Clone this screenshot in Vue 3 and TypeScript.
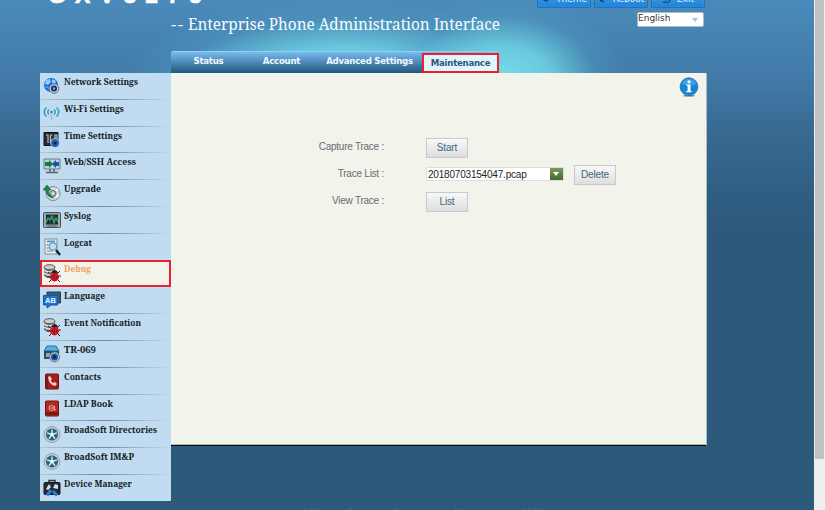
<script setup lang="ts">
import { ref } from 'vue'

interface MenuItem {
  label: string
  icon: string
  width: number
}

const tabs = [
  { label: 'Status', key: 'status' },
  { label: 'Account', key: 'account' },
  { label: 'Advanced Settings', key: 'advanced' },
  { label: 'Maintenance', key: 'maintenance' },
]
const activeTab = ref('maintenance')

const menu: MenuItem[] = [
  { label: 'Network Settings', icon: 'globe', width: 74 },
  { label: 'Wi-Fi Settings', icon: 'wifi', width: 60 },
  { label: 'Time Settings', icon: 'time', width: 58 },
  { label: 'Web/SSH Access', icon: 'web', width: 72 },
  { label: 'Upgrade', icon: 'upgrade', width: 37 },
  { label: 'Syslog', icon: 'syslog', width: 27 },
  { label: 'Logcat', icon: 'logcat', width: 28 },
  { label: 'Debug', icon: 'bug', width: 27 },
  { label: 'Language', icon: 'language', width: 41 },
  { label: 'Event Notification', icon: 'bug', width: 77 },
  { label: 'TR-069', icon: 'tr', width: 32 },
  { label: 'Contacts', icon: 'contacts', width: 37 },
  { label: 'LDAP Book', icon: 'ldap', width: 49 },
  { label: 'BroadSoft Directories', icon: 'broadsoft', width: 93 },
  { label: 'BroadSoft IM&P', icon: 'broadsoft', width: 70 },
  { label: 'Device Manager', icon: 'device', width: 68 },
]
const activeItem = ref('Debug')
const traceFile = ref('20180703154047.pcap')
</script>

<template>
  <div class="window">
    <div class="page">
      <header class="header">
        <div class="top">
          <div class="logo">GXV3275</div>
          <div class="actions">
            <button class="action"><svg viewBox="0 0 12 12"><circle cx="6" cy="5" r="4" fill="#174e7c" /></svg><span>Theme</span></button>
            <button class="action"><svg viewBox="0 0 12 12"><path d="M3 2v4q0 3 4 3M6 5h4" fill="none" stroke="#123e65" stroke-width="2" /></svg><span>Reboot</span></button>
            <button class="action"><svg viewBox="0 0 12 12"><path d="M1 10h6l3-3V1M4 8l4-4" fill="none" stroke="#174e7c" stroke-width="1.5" /></svg><span>Exit</span></button>
          </div>
        </div>
        <div class="title-row">
          <h1>
            <svg width="332" height="26">
              <text x="0" y="18" textLength="12" lengthAdjust="spacing">--</text>
              <text x="17" y="18" textLength="312" lengthAdjust="spacingAndGlyphs">Enterprise Phone Administration Interface</text>
            </svg>
          </h1>
          <div class="lang"><span>English</span><i></i></div>
        </div>
        <nav class="tabs">
          <a v-for="t in tabs" :key="t.key" :class="['tab', t.key, { active: activeTab === t.key }]" @click="activeTab = t.key">{{ t.label }}</a>
        </nav>
      </header>

      <div class="body">
        <aside class="sidebar">
          <a v-for="m in menu" :key="m.label" :class="['item', { active: activeItem === m.label }]" @click="activeItem = m.label">
            <svg class="icon" viewBox="0 0 18 18">
              <g v-if="m.icon === 'globe'">
                <circle cx="8" cy="8" r="7" fill="#176bd8" />
                <path d="M3 3l4-1 1 3-3 3-3-1zM9 2l4 2-1 3-3-1z" fill="#8dd0ff" />
                <path d="M2 10l3 0 2 4" stroke="#65b7f4" fill="none" />
                <circle cx="11" cy="11.5" r="4.8" fill="#c7ccd2" stroke="#65727f" />
                <circle cx="11" cy="11.5" r="3" fill="#142f63" /><circle cx="11" cy="11.5" r="1.2" fill="#69b6ff" />
              </g>
              <g v-else-if="m.icon === 'wifi'" fill="none" stroke="#369fc4" stroke-width="1.5">
                <path d="M3.500 3.500Q-1 8 3.500 12.500M6 5.500Q3.500 8 6 10.500M13.500 3.500Q18 8 13.500 12.500M11 5.500Q13.500 8 11 10.500" />
                <circle cx="8.500" cy="8" r="1.300" fill="#2789b5" stroke="none" /><path d="M8.500 10.500v5.500" stroke="#a8b8c2" />
              </g>
              <g v-else-if="m.icon === 'time'">
                <path d="M1 1.500h14v13H1z" fill="#292d33" stroke="#11151b" />
                <path d="M3 4h2v8M7.500 4v8M7.500 4h2M12 4h2v3h-2z" stroke="#b6bfc8" fill="none" stroke-width="1.200" />
                <circle cx="12" cy="12" r="4.800" fill="#bdc6d1" /><circle cx="12" cy="12" r="3.900" fill="#2061bb" /><circle cx="12" cy="12" r="1.600" fill="#10203d" />
              </g>
              <g v-else-if="m.icon === 'web'">
                <path d="M1 2h16v10H1z" fill="#b6d5e8" stroke="#6b7880" />
                <path d="M2 5h4V3l4 4-4 4V9H2z" fill="#157c3c" /><path d="M16 5h-3V3L9 7l4 4V9h3z" fill="#1e559a" />
                <path d="M7 12v3M11 12v3M3 15.500h12" stroke="#59636a" stroke-width="1.500" />
              </g>
              <g v-else-if="m.icon === 'upgrade'">
                <circle cx="10" cy="9.500" r="7" fill="#d4dcdf" stroke="#7e8990" /><path d="M10 9l5-4M11 11l5 1" stroke="#fff" stroke-width="1.500" />
                <circle cx="10" cy="9.500" r="3" fill="#a8b9be" stroke="#4f6c70" /><circle cx="10" cy="9.500" r="1" fill="#fff" />
                <path d="M0 6l4-5 4 5H5.500q0 6 5 8-7-1-8-8z" fill="#198443" stroke="#0c6331" stroke-width=".6" />
              </g>
              <g v-else-if="m.icon === 'syslog'">
                <rect x=".5" y="1.500" width="17" height="15" rx="1" fill="#a0a8ac" stroke="#475156" /><path d="M3 3.500h12v10H3z" fill="#152f31" />
                <path d="M3 3.500h12M7 3.500v10M11 3.500v10M3 8.500h12" stroke="#54686a" stroke-width=".5" /><path d="M3 12l2-5 2 2 2-4 2 7 2-5 2 4" fill="none" stroke="#35a371" stroke-width="1.300" /><path d="M4 15h10" stroke="#4b565c" />
              </g>
              <g v-else-if="m.icon === 'logcat'">
                <path d="M2 1h12v15H2z" fill="#e6eff3" stroke="#7c8f9e" /><path d="M4 3.500h8" stroke="#4a9bd0" stroke-width="2" /><path d="M4 7h3M4 10h3M4 13h6" stroke="#678aa1" /><path d="M3 7h2M3 10h2" stroke="#d68b66" />
                <circle cx="10" cy="8.500" r="3.700" fill="#bde3f1" stroke="#6a8795" /><path d="M13 12l4 5" stroke="#18252e" stroke-width="2.500" />
              </g>
              <g v-else-if="m.icon === 'bug'">
                <path d="M1 3v9q5 4 11 0V3" fill="#697075" /><ellipse cx="6.500" cy="3.200" rx="5.500" ry="2.500" fill="#c7cccf" stroke="#555" /><path d="M1 6q5 4 10 0M1 9q5 4 10 0" stroke="#e3e5e6" fill="none" stroke-width="1.400" />
                <path d="M5 8l4 3M17 7l-4 4M4 13h4M18 12h-5M6 18l4-4M17 18l-4-4" stroke="#2c2424" />
                <ellipse cx="11.500" cy="13" rx="4.600" ry="4.400" fill="#cf1b25" /><path d="M8 9q1-3 3.500-3T15 9z" fill="#2b2427" /><path d="M11.500 9v8" stroke="#5d1117" stroke-width=".6" /><circle cx="9.500" cy="13" r=".7" fill="#501016" /><circle cx="13.700" cy="13" r=".7" fill="#501016" />
              </g>
              <g v-else-if="m.icon === 'language'">
                <path d="M4 1h13.500v11h-3l-2 2-3-3H4z" fill="#45576a" stroke="#263c51" /><path d="M.5 4.500h14v9.500H8l-4 3v-3H.5z" fill="#1d77cf" stroke="#17569a" />
                <text x="2" y="12" font-family="Liberation Sans" font-weight="700" font-size="7.5" fill="#e8f7ff">AB</text>
              </g>
              <g v-else-if="m.icon === 'tr'">
                <path d="M4 1h9l3 5H1z" fill="#55b1e8" stroke="#1e6fab" /><path d="M1 6h15v8H1z" fill="#314957" /><path d="M3 8h4v4H3z" fill="#8eabb9" />
                <circle cx="11.500" cy="12" r="5" fill="#bdc9d3" stroke="#687a87" /><circle cx="11.500" cy="12" r="3.500" fill="#1557ac" /><circle cx="11.500" cy="12" r="1.400" fill="#0a2142" />
              </g>
              <g v-else-if="m.icon === 'contacts'">
                <rect x="2.500" y="2" width="13" height="15" rx="1" fill="#a71c19" stroke="#6c1711" /><path d="M4 3v13" stroke="#671410" /><path d="M5 5q1 8 7 9l2-2-2-2-2 1q-2-1-2-3l1-1-2-3z" fill="#f1d0c8" />
              </g>
              <g v-else-if="m.icon === 'ldap'">
                <rect x="2.500" y="2" width="13" height="15" rx="1" fill="#b3281f" stroke="#6c1711" /><path d="M3 14.500h12" stroke="#671410" stroke-width="2" /><circle cx="8.500" cy="9" r="2.600" fill="none" stroke="#e6aaa3" /><circle cx="8.500" cy="9" r="1" fill="#e6aaa3" /><path d="M11.500 7v4h1.500" stroke="#e6aaa3" fill="none" />
              </g>
              <g v-else-if="m.icon === 'broadsoft'">
                <circle cx="9" cy="9.500" r="8" fill="#c4c7c8" stroke="#929ca0" stroke-width=".8" /><circle cx="9" cy="9.500" r="5.900" fill="#20627f" />
                <path d="M9 4.500v5M9 9.500l-4.800-1.500M9 9.500l4.800-1.500M9 9.500l-3 4.200M9 9.500l3 4.200" stroke="#c8eefa" stroke-width="1.500" /><circle cx="9" cy="9.500" r="1.800" fill="#e9fbff" />
              </g>
              <g v-else>
                <path d="M6 4V1.500h6V4" fill="none" stroke="#30363c" stroke-width="1.500" /><rect x="1" y="3.500" width="16" height="12" rx="1" fill="#252b31" stroke="#15191e" /><path d="M3 10l3-5 2 3-3 3zM10 9l2-4 3 1v4z" fill="#d6dfe5" /><path d="M8 11l-4 5.500M10 12l4 4.500" stroke="#267ad9" stroke-width="3" />
              </g>
            </svg>
            <svg class="label" width="104" height="16"><text x="0" y="11" :textLength="m.width" lengthAdjust="spacingAndGlyphs">{{ m.label }}</text></svg>
          </a>
        </aside>

        <main class="panel">
          <svg class="info" viewBox="0 0 20 20">
            <ellipse cx="10" cy="18.800" rx="6" ry="1" fill="#8f9698" /><circle cx="10" cy="9.700" r="8.900" fill="#1985d8" stroke="#2c6fa8" stroke-width=".8" />
            <path d="M3 7q2-5 7-5t7 5q-7 3-14 0z" fill="#5bb3ef" opacity=".6" /><circle cx="10" cy="4.800" r="1.600" fill="#fff" /><path d="M7.500 7.500h4v6.500h1.200v1.200H7.300V14h1.300V8.700H7.500z" fill="#fff" />
          </svg>
          <div class="form">
            <div class="row"><label>Capture Trace :</label><button class="btn">Start</button></div>
            <div class="row">
              <label>Trace List :</label>
              <div class="select"><span>{{ traceFile }}</span><b><i></i></b></div>
              <button class="btn delete">Delete</button>
            </div>
            <div class="row"><label>View Trace :</label><button class="btn">List</button></div>
          </div>
        </main>
      </div>
      <footer class="footer">All Rights Reserved Grandstream Networks, Inc. 2018</footer>
    </div>
    <div class="scrollbar"><div class="thumb"></div></div>
  </div>
</template>

<style>
body { overflow: hidden; }
</style>

<style scoped>
* { box-sizing: border-box; }
.window {
  display: flex;
  width: 825px;
  height: 510px;
  overflow: hidden;
  background: #2d597b;
}
.page {
  width: 814px;
  height: 510px;
  overflow: hidden;
  padding-left: 40px;
  background:
    radial-gradient(ellipse 125px 88px at 503px 82px, #75deeb 0%, rgba(112, 212, 228, .85) 40%, rgba(80, 165, 200, .3) 75%, transparent 100%),
    radial-gradient(ellipse 225px 82px at 345px 80px, #75deeb 0%, rgba(112, 212, 228, .85) 40%, rgba(80, 165, 200, .3) 75%, transparent 100%),
    linear-gradient(#4a8aba 0, #427ba9 75px, #386a92 130px, #2f5d81 200px, #2d597b 240px);
}
.header { display: flex; flex-direction: column; width: 667px; height: 73px; }
.top { display: flex; justify-content: space-between; height: 12px; width: 664px; }
.logo {
  margin: -17px 0 0 8px;
  font: 700 23px/24px "Liberation Sans", sans-serif;
  letter-spacing: 9px;
  color: #fff;
  -webkit-text-stroke: .6px #fff;
}
.actions { display: flex; gap: 3px; margin: -12px -1px 0 0; }
.action {
  display: flex;
  align-items: center;
  justify-content: center;
  gap: 5px;
  width: 54px;
  height: 20px;
  padding: 1px 0 0;
  border: 1px solid #2172b8;
  border-radius: 1px;
  background: linear-gradient(#48a3e8, #1f83da);
  box-shadow: inset 0 0 1px #74bbf0;
  color: #e1f4ff;
  font: 9px "DejaVu Sans", sans-serif;
}
.action svg { width: 10px; height: 10px; }
.title-row { display: flex; justify-content: space-between; height: 39px; padding-left: 131px; width: 664px; }
h1 { margin: 0; height: 26px; }
h1 svg { display: block; }
h1 text { font: 400 17px "Noto Serif", "DejaVu Serif", serif; fill: #f7fcff; }
.lang {
  display: flex;
  justify-content: space-between;
  width: 67px;
  height: 15px;
  padding-right: 5px;
  border: 1px solid #a6bdca;
  border-radius: 2px;
  background: #fff;
  color: #333;
  font: 9px/11px "DejaVu Sans", sans-serif;
}
.lang i { margin-top: 5px; width: 0; height: 0; border: 3px solid transparent; border-top: 4px solid #a6c7d9; border-bottom: 0; }
.tabs {
  display: flex;
  width: 328px;
  height: 22px;
  margin-left: 131px;
  border-top: 1px solid #91cffc;
  border-radius: 2px 3px 0 0;
  background: linear-gradient(#78bbed, #4b88b8 50%, #245579);
}
.tab { text-align: center; white-space: nowrap; font: 700 8.600px/19px "DejaVu Sans", sans-serif; letter-spacing: -.25px; color: #f1faff; }
.status { width: 75px; }
.account { width: 71px; }
.advanced { width: 105px; }
.maintenance { width: 77px; }
.tab.active { height: 20px; margin-top: 1px; border: 2px solid #e8232d; background: #e3f4fc; color: #285a7e; line-height: 17px; }
.body { display: flex; align-items: flex-start; height: 428px; width: 667px; }
.sidebar { width: 131px; height: 428px; background: #c1dcf1; overflow: hidden; }
.item {
  display: flex;
  height: 26.800px;
  padding: 2px 0 0 3px;
  background: linear-gradient(90deg, #b6c9d5, #668da8 48%, #c1dcf1) bottom / 100% 1px no-repeat;
}
.item.active { height: 27px; border: 2px solid #e8232d; padding: 0 0 0 1px; margin: -1px 0 .8px; background: #f2f3eb; }
.icon { flex: none; width: 18px; height: 18px; margin-top: 2px; }
.label { flex: none; margin: -1px 0 0 3px; overflow: visible; }
.label text { font: 700 9px "Noto Serif", "DejaVu Serif", serif; fill: #111b23; }
.item.active .label text { fill: #f2a15d; }
.panel { display: flex; flex-direction: column; width: 536px; height: 373px; border-right: 1px solid #aabfc1; border-bottom: 1px solid #050b10; box-shadow: inset 0 -1px #aabab0; background: #f2f3eb; }
.info { flex: none; width: 20px; height: 20px; margin: 4px 7px 0 auto; }
.form { padding-top: 37px; }
.row { display: flex; height: 27px; align-items: flex-start; }
label { width: 213px; padding-top: 7px; text-align: right; font: 10px/12px "Liberation Sans", sans-serif; letter-spacing: -.24px; color: #686c6e; }
.btn {
  width: 42px;
  height: 20px;
  margin: 4px 0 0 42px;
  padding: 0;
  border: 1px solid #c8cac9;
  background: linear-gradient(#f8f8f8, #dedede);
  color: #426780;
  font: 10px/18px "Liberation Sans", sans-serif;
  letter-spacing: -.15px;
}
.select { display: flex; justify-content: space-between; width: 138px; height: 14px; margin: 6px 0 0 42px; padding-left: 1px; border: 1px solid #dedfd9; background: #fff; color: #252525; font: 10px/13px "Liberation Sans", sans-serif; letter-spacing: -.2px; }
.select b { width: 13px; height: 12px; padding: 4px 0 0 3px; background: linear-gradient(#79985b, #426b30); }
.select i { display: block; width: 0; height: 0; border: 3px solid transparent; border-top: 4px solid #fff; border-bottom: 0; }
.btn.delete { margin-left: 10px; }
.footer { padding: 5px 0 0 262px; white-space: nowrap; font: 9px/12px "DejaVu Sans", sans-serif; color: #426b8b; }
.scrollbar { width: 11px; height: 510px; padding-left: 1px; background: #efefef; }
.thumb { width: 9px; height: 459px; background: #c1c1c1; }
</style>
